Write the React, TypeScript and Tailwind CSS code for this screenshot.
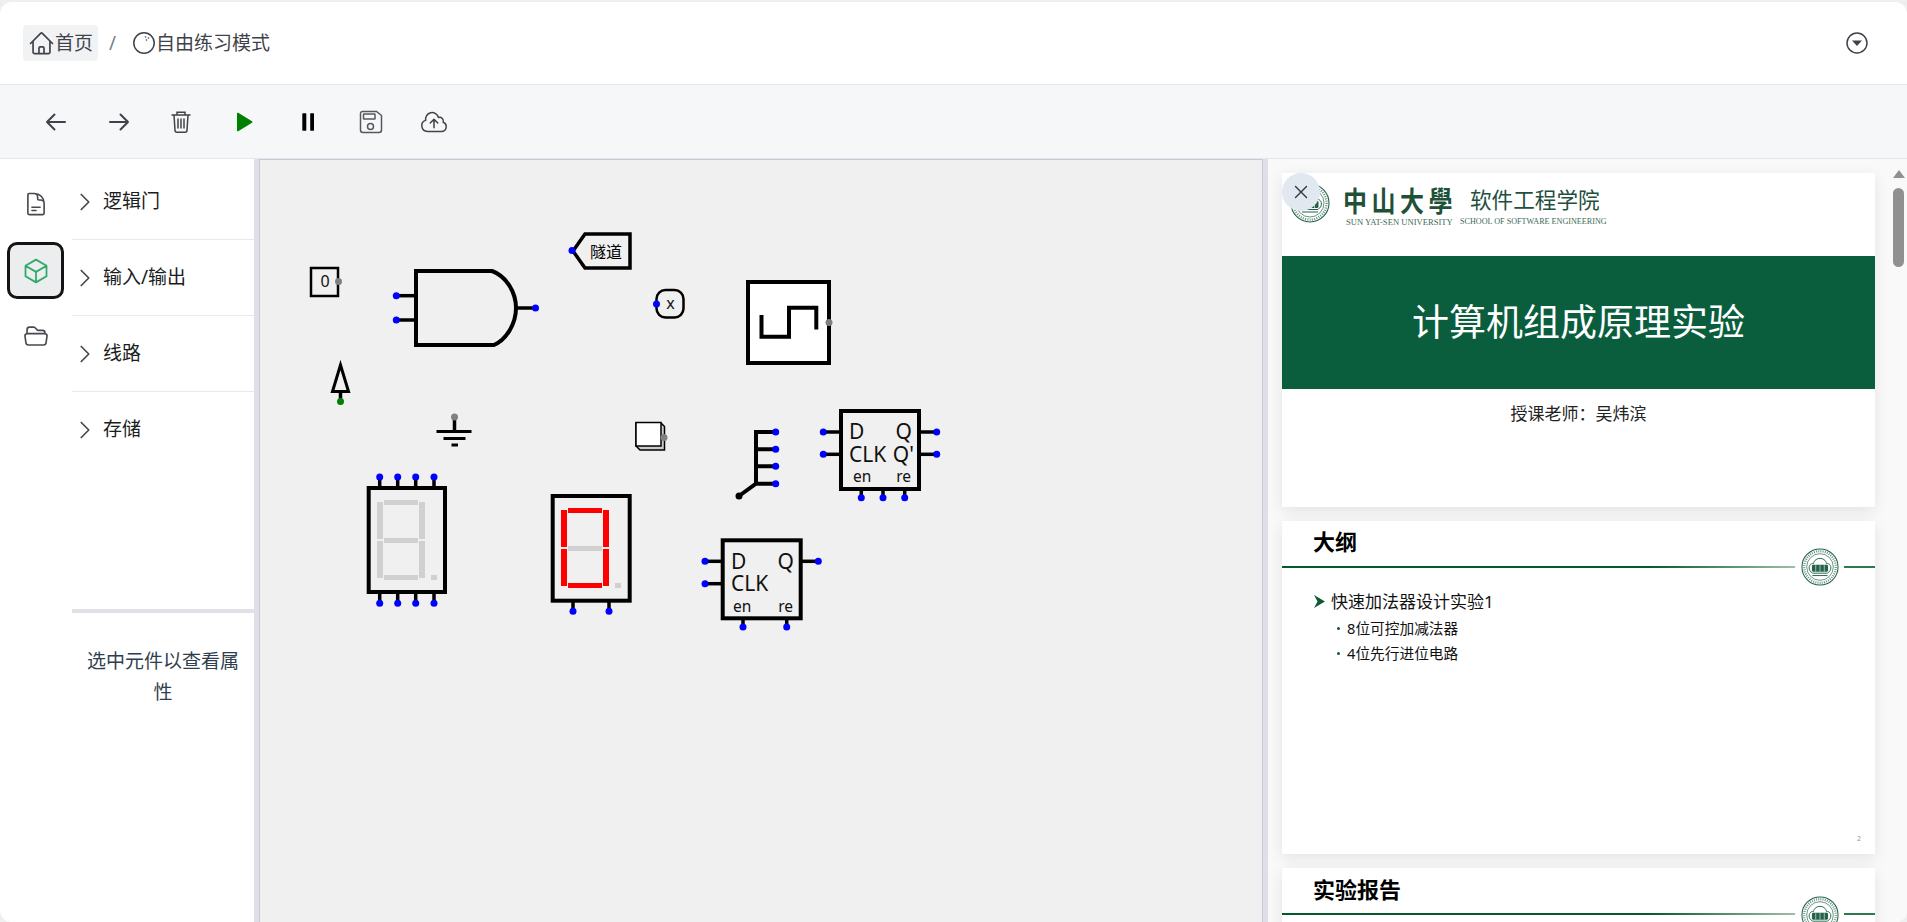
import {
  HiOutlineArrowLeft,
  HiOutlineArrowRight,
  HiOutlineChevronRight,
  HiOutlineCloudArrowUp,
  HiOutlineCube,
  HiOutlineDocumentText,
  HiOutlineFolderOpen,
  HiOutlineHome,
  HiOutlineXMark,
} from 'react-icons/hi2';

const categories = ['逻辑门', '输入/输出', '线路', '存储'];

function Pin({ x, y, color = '#0000ff' }: { x: number; y: number; color?: string }) {
  return <circle cx={x} cy={y} r={3.5} fill={color} />;
}

// wire stub plus its blue endpoint
function Wire({ x1, y1, x2, y2, color }: { x1: number; y1: number; x2: number; y2: number; color?: string }) {
  return (
    <>
      <line x1={x1} y1={y1} x2={x2} y2={y2} stroke="#000" strokeWidth={3.5} />
      <Pin x={x2} y={y2} color={color} />
    </>
  );
}

function SevenSegment({ x, y, lit }: { x: number; y: number; lit: boolean }) {
  const on = lit ? '#ff0000' : '#d0d0d0';
  return (
    <g transform={`translate(${x} ${y})`}>
      <rect x={7} y={0} width={34} height={5} fill={on} />
      <rect x={7} y={38} width={34} height={5} fill="#d0d0d0" />
      <rect x={7} y={75} width={34} height={5} fill={on} />
      <rect x={0} y={2} width={6} height={37} fill={on} />
      <rect x={0} y={41} width={6} height={37} fill={on} />
      <rect x={42} y={2} width={6} height={37} fill={on} />
      <rect x={42} y={41} width={6} height={37} fill={on} />
      <rect x={54} y={75} width={6} height={5} fill="#d0d0d0" />
    </g>
  );
}

function Circuit() {
  return (
    <svg viewBox="260 160 1002 762" className="block h-full w-full font-['Noto_Sans','Noto_Sans_CJK_SC',sans-serif]">
      {/* input */}
      <rect x={311} y={268} width={27} height={28} fill="none" stroke="#000" strokeWidth={2.5} />
      <text x={325} y={287} fontSize={16} textAnchor="middle" fill="#111">0</text>
      <Pin x={338.5} y={281.5} color="#808080" />

      {/* and gate */}
      <path d="M416 271H492C506 276 516 292 516 308C516 324 506 340 494 345H416Z" fill="none" stroke="#000" strokeWidth={4} />
      <Wire x1={416} y1={295.7} x2={396.3} y2={295.7} />
      <Wire x1={416} y1={320} x2={396.3} y2={320} />
      <Wire x1={516} y1={308} x2={535.5} y2={308} />

      {/* probe arrow */}
      <path d="M340.5 365L332.5 391.5H348.5Z" fill="none" stroke="#000" strokeWidth={3} />
      <Wire x1={340.5} y1={392} x2={340.5} y2={401.5} color="#008000" />

      {/* ground */}
      <line x1={454.5} y1={417} x2={454.5} y2={431} stroke="#000" strokeWidth={3.5} />
      <Pin x={454.5} y={417} color="#808080" />
      <path d="M436.5 431.5H471.5M443.5 438.5H465.5M451.5 445H458" stroke="#000" strokeWidth={3} fill="none" />

      {/* tunnel */}
      <path d="M585 234H630V268H585L573 251Z" fill="none" stroke="#000" strokeWidth={3.5} />
      <Pin x={572} y={250.5} />
      <text x={590} y={258} fontSize={16} fill="#000">隧道</text>

      {/* output */}
      <rect x={656.5} y={290} width={27} height={27.5} rx={9} fill="none" stroke="#000" strokeWidth={2.5} />
      <Pin x={656.5} y={304} />
      <text x={670.5} y={308.5} fontSize={16} textAnchor="middle" fill="#111">x</text>

      {/* clock */}
      <rect x={748} y={282} width={81} height={81} fill="#fff" stroke="#000" strokeWidth={4} />
      <path d="M761.5 315V336.7H789V307.7H816.3V329.5" fill="none" stroke="#000" strokeWidth={4} />
      <Pin x={829} y={322.5} color="#808080" />

      {/* constant box */}
      <path d="M636 423H661L664.5 426.5V450H640L636 446Z" fill="#ccc" stroke="#000" strokeWidth={1.5} />
      <rect x={636} y={422.5} width={25} height={23.5} fill="#fff" stroke="#000" strokeWidth={1.5} />
      <Pin x={664} y={437.5} color="#808080" />

      {/* splitter */}
      <path d="M775.7 432H756V483.7H775.7M756 449.3H775.7M756 466.3H775.7M756 483.7L739 496" fill="none" stroke="#000" strokeWidth={4} />
      <Pin x={775.7} y={432} />
      <Pin x={775.7} y={449.3} />
      <Pin x={775.7} y={466.3} />
      <Pin x={775.7} y={483.7} />
      <Pin x={739} y={496} color="#000" />

      {/* d flip flop with Q' */}
      <Wire x1={841} y1={432} x2={823.3} y2={432} />
      <Wire x1={841} y1={454.3} x2={823.3} y2={454.3} />
      <Wire x1={919} y1={432} x2={936.7} y2={432} />
      <Wire x1={919} y1={454.3} x2={936.7} y2={454.3} />
      <Wire x1={861.3} y1={489} x2={861.3} y2={497.7} />
      <Wire x1={883} y1={489} x2={883} y2={497.7} />
      <Wire x1={904.7} y1={489} x2={904.7} y2={497.7} />
      <rect x={841} y={411} width={78} height={78} fill="#f0f0f0" stroke="#000" strokeWidth={4} />
      <g fill="#111" fontSize={21}>
        <text x={849} y={439}>D</text>
        <text x={849} y={461.5}>CLK</text>
        <text x={912} y={439} textAnchor="end">Q</text>
        <text x={914} y={461.5} textAnchor="end">Q'</text>
        <text x={853} y={482} fontSize={15.5}>en</text>
        <text x={911} y={482} fontSize={15.5} textAnchor="end">re</text>
      </g>

      {/* 8 pin display */}
      {[379.7, 397.7, 415.7, 434].map((x) => (
        <g key={x}>
          <Wire x1={x} y1={488} x2={x} y2={477} />
          <Wire x1={x} y1={592} x2={x} y2={603.3} />
        </g>
      ))}
      <rect x={368.7} y={488} width={76.3} height={104} fill="none" stroke="#000" strokeWidth={4} />
      <SevenSegment x={377} y={500} lit={false} />

      {/* 2 pin display */}
      <Wire x1={573} y1={600.7} x2={573} y2={611.3} />
      <Wire x1={609} y1={600.7} x2={609} y2={611.3} />
      <rect x={552.7} y={496} width={77} height={104.7} fill="none" stroke="#000" strokeWidth={4} />
      <SevenSegment x={561} y={508} lit />

      {/* d flip flop */}
      <Wire x1={722.7} y1={561.3} x2={705} y2={561.3} />
      <Wire x1={722.7} y1={583.7} x2={705} y2={583.7} />
      <Wire x1={800.7} y1={561.3} x2={818.3} y2={561.3} />
      <Wire x1={743} y1={618.3} x2={743} y2={627} />
      <Wire x1={786.7} y1={618.3} x2={786.7} y2={627} />
      <rect x={722.7} y={540.3} width={78} height={78} fill="#f0f0f0" stroke="#000" strokeWidth={4} />
      <g fill="#111" fontSize={21}>
        <text x={731} y={569}>D</text>
        <text x={731} y={591}>CLK</text>
        <text x={794} y={569} textAnchor="end">Q</text>
        <text x={733} y={611.5} fontSize={15.5}>en</text>
        <text x={793} y={611.5} fontSize={15.5} textAnchor="end">re</text>
      </g>
    </svg>
  );
}

function Seal({ size }: { size: number }) {
  return (
    <svg width={size} height={size} viewBox="0 0 40 40" fill="none" stroke="#24634a">
      <circle cx={20} cy={20} r={19} strokeWidth={1.1} />
      <circle cx={20} cy={20} r={14} strokeWidth={0.7} />
      <circle cx={20} cy={20} r={16.6} strokeWidth={2.4} strokeDasharray="1 1.3" opacity={0.7} />
      <path d="M9.5 24c-2.5-4 .5-8.5 3.5-7.5 1-4 4-5.5 7-5.5s6 1.5 7 5.5c3-1 6 3.5 3.5 7.5l-2.5 2.5h-16z" strokeWidth={1} />
      <rect x={11.5} y={17.5} width={17} height={7.5} rx={1.5} fill="#24634a" stroke="none" />
      <path d="M15.5 18v7M20 18v7M24.5 18v7" stroke="#b9d0c4" strokeWidth={0.9} />
      <path d="M12 29h16" strokeWidth={1} />
    </svg>
  );
}

function SlideHeading({ title, children }: { title: string; children?: React.ReactNode }) {
  return (
    <div className="relative h-[333.5px] w-[593px] shrink-0 bg-white shadow-[0_4px_14px_rgba(0,0,0,0.09)]">
      <div className="flex h-[45px] items-center pb-[4px] pl-[31px] text-[22px] leading-none font-bold text-black">{title}</div>
      <div className="h-[2px] w-full bg-[linear-gradient(90deg,#06592b_0%,#06592b_62%,#9dbfa9_86.5%,#2d7a4b_86.6%,#2d7a4b_100%)]" />
      <div className="absolute top-[22px] right-[31px] flex h-[49px] w-[49px] items-center justify-center rounded-full bg-white">
        <Seal size={38} />
      </div>
      {children}
    </div>
  );
}

export default function App() {
  return (
    <div className="h-screen overflow-hidden bg-[#efefef] pt-[2px] font-['Noto_Sans','Noto_Sans_CJK_SC',sans-serif]">
      <div className="flex h-full flex-col overflow-hidden rounded-xl bg-white">
        {/* breadcrumb */}
        <header className="flex h-[83px] shrink-0 items-center justify-between border-b border-[#e2e8f0] pr-[38px] pl-[23px]">
          <div className="flex items-center text-[19px] text-[#3f4349]">
            <div className="flex h-9 items-center rounded bg-[#f1f2f3] px-[5px]">
              <HiOutlineHome size={27} />
              <span className="pt-px">首页</span>
            </div>
            <span className="mx-[11px] text-[#7a7f87]">/</span>
            <svg width={24} height={24} viewBox="0 0 24 24" fill="none" stroke="currentColor" className="ml-[5px]">
              <circle cx={12} cy={12} r={10.2} strokeWidth={1.5} />
              <circle cx={13.5} cy={6} r={0.8} fill="currentColor" stroke="none" />
              <circle cx={16.5} cy={7} r={0.8} fill="currentColor" stroke="none" />
              <circle cx={14.5} cy={9} r={0.8} fill="currentColor" stroke="none" />
            </svg>
            <span className="pt-px">自由练习模式</span>
          </div>
          <svg width={24} height={24} viewBox="0 0 24 24" fill="none" className="text-[#3f4349]">
            <circle cx={12} cy={12} r={10} stroke="currentColor" strokeWidth={1.5} />
            <path d="M7 9.5H17L12 15Z" fill="currentColor" />
          </svg>
        </header>

        {/* toolbar */}
        <div className="flex h-[74px] shrink-0 items-center border-b border-[#e2e8f0] bg-[#f6f7f9] pl-[24px] text-[#404347]">
          <button className="flex w-[63px] justify-center"><HiOutlineArrowLeft size={24} strokeWidth={2} /></button>
          <button className="flex w-[63px] justify-center"><HiOutlineArrowRight size={24} strokeWidth={2} /></button>
          <button className="flex w-[63px] justify-center pr-[2px]">
            <svg width={24} height={24} viewBox="0 0 24 24" fill="none" stroke="currentColor" strokeWidth={1.5}>
              <path d="M2.5 5h19M8 5V2.2h8V5M5 5l1 15.2a2 2 0 002 2h8a2 2 0 002-2L19 5M9 8.5v10M12 8.5v10M15 8.5v10" />
            </svg>
          </button>
          <button className="flex w-[63px] justify-center pr-[2px]">
            <svg width={24} height={24} viewBox="0 0 24 24" fill="#008000">
              <path d="M5 3.5a.8.8 0 011.2-.7L20 11.3a.8.8 0 010 1.4L6.2 21.2a.8.8 0 01-1.2-.7z" />
            </svg>
          </button>
          <button className="flex w-[63px] justify-center">
            <svg width={24} height={24} viewBox="0 0 24 24" fill="#000">
              <rect x={6.3} y={3.3} width={4} height={17.4} rx={0.6} />
              <rect x={14.2} y={3.3} width={3.8} height={17.4} rx={0.6} />
            </svg>
          </button>
          <button className="flex w-[63px] justify-center">
            <svg width={24} height={24} viewBox="0 0 24 24" fill="none" stroke="#55585d" strokeWidth={1.5}>
              <path d="M3.5 1.5H17.5L22.5 5.5V20a2.5 2.5 0 01-2.5 2.5H4A2.5 2.5 0 011.5 20V3.5a2 2 0 012-2z" />
              <rect x={4.5} y={4} width={11.5} height={5} rx={0.5} />
              <circle cx={11.5} cy={16.5} r={3} />
            </svg>
          </button>
          <button className="flex w-[63px] justify-center"><HiOutlineCloudArrowUp size={30} strokeWidth={1.2} /></button>
        </div>

        <div className="flex min-h-0 flex-1">
          {/* icon rail */}
          <nav className="flex w-[72px] shrink-0 flex-col items-start gap-[10px] pt-[16px] pl-[7px] text-[#46494e]">
            <div className="flex h-[57px] w-[57px] items-center justify-center"><HiOutlineDocumentText size={26} /></div>
            <div className="flex h-[57px] w-[57px] items-center justify-center rounded-[10px] border-[3px] border-[#141414] bg-[#ebedee] text-[#2eaa6a]">
              <HiOutlineCube size={28} />
            </div>
            <div className="flex h-[57px] w-[57px] items-center justify-center pb-[3px]"><HiOutlineFolderOpen size={26} /></div>
          </nav>

          {/* component list and properties */}
          <aside className="flex w-[182px] shrink-0 flex-col">
            <div className="flex-1 pt-[5px]">
              {categories.map((name, i) => (
                <div
                  key={name}
                  className={`flex h-[76px] items-center gap-[6px] pl-px text-[19px] text-[#1a1d22] ${i < 3 ? 'border-b border-[#e8e9ec]' : ''}`}
                >
                  <HiOutlineChevronRight size={24} strokeWidth={1.7} className="text-[#45484d]" />
                  <span className={i === 0 ? '' : 'pb-px'}>{name}</span>
                </div>
              ))}
            </div>
            <div className="h-[313px] shrink-0 border-t-4 border-[#e0e0e6] px-3 pt-[33px] text-center text-[19px] leading-[31px] text-[#2f3e4e]">
              选中元件以查看属性
            </div>
          </aside>

          <div className="w-[5px] shrink-0 bg-[#dfdfe7]" />

          {/* canvas */}
          <main className="w-[1004px] shrink-0 overflow-hidden border-x border-t border-[#c9c9d1] bg-[#f0f0f0]">
            <Circuit />
          </main>

          <div className="w-[5px] shrink-0 bg-[#dfdfe7]" />

          {/* slides */}
          <section className="relative flex min-w-0 flex-1 flex-col gap-[14px] overflow-hidden bg-[#f9f9f9] pt-[14px] pl-[14px]">
            <div className="relative h-[333.5px] w-[593px] shrink-0 bg-white shadow-[0_4px_14px_rgba(0,0,0,0.09)]">
              <div className="flex h-[83px] items-start gap-[13px] pt-[10px] pl-2">
                <Seal size={40} />
                <div className="mt-[2px] flex flex-col gap-[2px]">
                  <div className="flex items-center">
                    <span className="w-[127px] scale-y-[1.2] font-['Noto_Sans_CJK_TC',sans-serif] text-[24px] leading-[30px] font-bold tracking-[4.5px] text-[#1e5138]">中山大學</span>
                    <span className="text-[21.6px] leading-[30px] text-[#234f3e]">软件工程学院</span>
                  </div>
                  <div className="flex font-['Liberation_Serif',serif] leading-[10px] text-[#3d6a55]">
                    <span className="ml-[3px] w-[114px] text-[8.6px]">SUN YAT-SEN UNIVERSITY</span>
                    <span className="text-[8.15px]">SCHOOL OF SOFTWARE ENGINEERING</span>
                  </div>
                </div>
              </div>
              <div className="flex h-[133px] items-center justify-center bg-[#0a5e3e] pb-[2px] text-[37px] text-white">计算机组成原理实验</div>
              <div className="pt-[13px] text-center text-[17px] leading-[24px] text-[#222]">授课老师：吴炜滨</div>
              <button className="absolute top-0 left-0 flex h-[38px] w-[38px] items-center justify-center rounded-full bg-[#e2e8f0] text-[#333]">
                <HiOutlineXMark size={22} />
              </button>
            </div>

            <SlideHeading title="大纲">
              <div className="pt-[22px] pl-[32px] text-[#111]">
                <div className="flex items-center gap-[6px] text-[17px] leading-[24px]">
                  <svg width={11} height={13} viewBox="0 0 11 13">
                    <path d="M0 0L11 6.5L0 13L3.5 6.5Z" fill="#0f5a33" />
                  </svg>
                  <span>快速加法器设计实验1</span>
                </div>
                <div className="mt-[2px] flex items-center gap-[7px] pl-[23px] text-[14.7px] leading-[25px]">
                  <span className="h-[3px] w-[3px] rounded-full bg-[#0f5a33]" />
                  <span>8位可控加减法器</span>
                </div>
                <div className="flex items-center gap-[7px] pl-[23px] text-[14.7px] leading-[25px]">
                  <span className="h-[3px] w-[3px] rounded-full bg-[#0f5a33]" />
                  <span>4位先行进位电路</span>
                </div>
              </div>
              <span className="absolute right-[14px] bottom-[12px] text-[7px] leading-none text-[#999]">2</span>
            </SlideHeading>

            <SlideHeading title="实验报告" />

            {/* scrollbar */}
            <div className="absolute top-[11px] right-[3px] flex w-[11px] flex-col items-center gap-[10px]">
              <div className="h-0 w-0 border-x-[6px] border-b-[8px] border-x-transparent border-b-[#909090]" />
              <div className="h-[79px] w-[11px] rounded-full bg-[#909090]" />
            </div>
          </section>
        </div>
      </div>
    </div>
  );
}
